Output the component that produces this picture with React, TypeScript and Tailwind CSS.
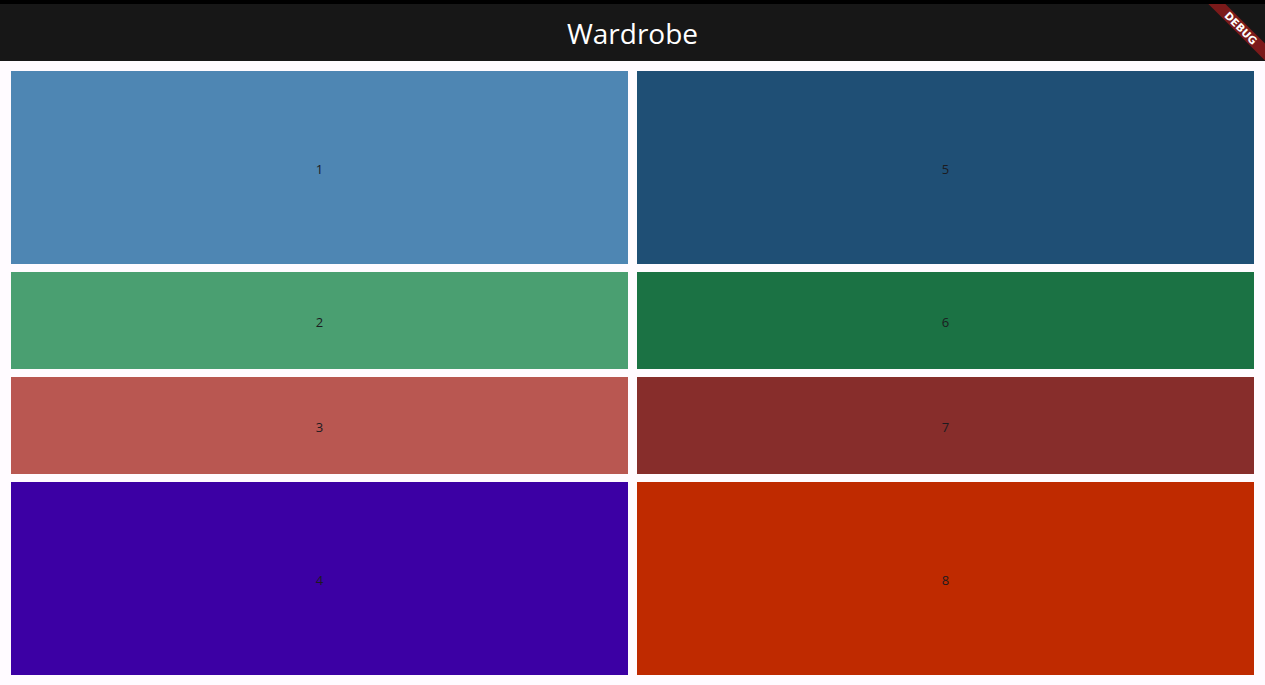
const LEFT = [
  { label: '1', bg: 'bg-[#4e86b3]', grow: 'grow-[2]' },
  { label: '2', bg: 'bg-[#4a9f71]', grow: 'grow' },
  { label: '3', bg: 'bg-[#b95751]', grow: 'grow' },
  { label: '4', bg: 'bg-[#3c00a4]', grow: 'grow-[2]' },
]

const RIGHT = [
  { label: '5', bg: 'bg-[#1f4f75]', grow: 'grow-[2]' },
  { label: '6', bg: 'bg-[#1b7244]', grow: 'grow' },
  { label: '7', bg: 'bg-[#872d2b]', grow: 'grow' },
  { label: '8', bg: 'bg-[#bf2a00]', grow: 'grow-[2]' },
]

function DebugBanner() {
  return (
    <svg className="absolute right-0 top-0 h-[57px] w-[57px]" viewBox="0 0 57 57">
      <polygon points="0.4,0 17.4,0 57,39.6 57,56.6" fill="#7b1a1a" />
      <text
        x="33"
        y="24"
        transform="rotate(45 33 24)"
        textAnchor="middle"
        dominantBaseline="central"
        fill="#fff"
        fontSize="10.5"
        fontWeight="900"
        fontFamily="'DejaVu Sans', sans-serif"
      >
        DEBUG
      </text>
    </svg>
  )
}

function Column({ items }: { items: typeof LEFT }) {
  return (
    <div className="flex min-h-0 flex-col gap-2">
      {items.map((item) => (
        <div
          key={item.label}
          className={`${item.bg} ${item.grow} flex basis-0 items-center justify-center text-[13px] text-[#1c1b1f]`}
        >
          <span className="translate-y-[2px]">{item.label}</span>
        </div>
      ))}
    </div>
  )
}

export default function App() {
  return (
    <div className="flex h-[685px] w-full flex-col overflow-hidden bg-black font-['Open_Sans',sans-serif]">
      <div className="h-1 shrink-0 bg-black" />
      <div className="relative flex h-[57px] shrink-0 items-center justify-center bg-[#171717]">
        <h1 className="text-[28px] font-normal leading-none text-white">Wardrobe</h1>
        <DebugBanner />
      </div>
      <div className="grid min-h-0 flex-1 grid-cols-2 gap-x-[9px] bg-[#fffbff] px-[11px] py-[10px]">
        <Column items={LEFT} />
        <Column items={RIGHT} />
      </div>
    </div>
  )
}
